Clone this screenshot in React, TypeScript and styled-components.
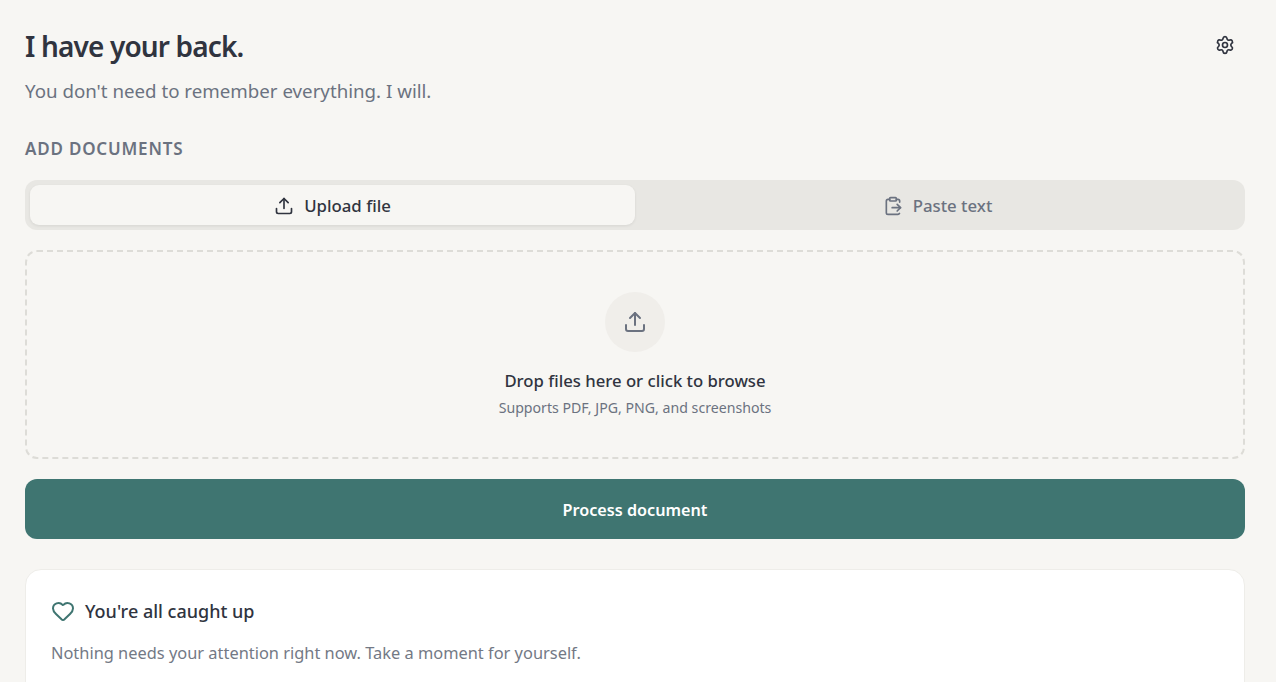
import React from "react";
import styled, { createGlobalStyle } from "styled-components";
import { ClipboardPaste, Heart, Settings, Upload } from "lucide-react";

const GlobalStyle = createGlobalStyle`
  html, body {
    margin: 0;
    height: 100%;
    overflow: hidden;
    background: #f7f6f3;
  }
  * {
    box-sizing: border-box;
  }
  body {
    font-family: "Noto Sans", "Open Sans", sans-serif;
    color: #30343f;
  }
`;

const Page = styled.main`
  padding: 25px 31px 0 25px;
  display: flex;
  flex-direction: column;
`;

const Header = styled.header`
  display: flex;
  justify-content: space-between;
  align-items: flex-start;
  margin-bottom: 31px;
`;

const Title = styled.h1`
  margin: 0 0 9px;
  font-size: 28px;
  line-height: 42px;
  font-weight: 600;
  letter-spacing: -0.85px;
`;

const Subtitle = styled.p`
  margin: 0;
  font-size: 18.72px;
  line-height: 30px;
  color: #6b7280;
`;

const IconButton = styled.button`
  width: 40px;
  height: 40px;
  border: 0;
  padding: 0;
  background: transparent;
  color: #30343f;
  display: flex;
  align-items: center;
  justify-content: center;
`;

const SectionLabel = styled.h2`
  margin: 0 0 19px;
  font-size: 17px;
  line-height: 24px;
  font-weight: 600;
  letter-spacing: 0.8px;
  text-transform: uppercase;
  color: #6b7280;
`;

const Tabs = styled.div`
  height: 50px;
  padding: 5px;
  border-radius: 12px;
  background: #e8e7e3;
  display: grid;
  grid-template-columns: 1fr 1fr;
  margin-bottom: 20px;
`;

const Tab = styled.button<{ $active?: boolean }>`
  border: 0;
  border-radius: 9px;
  padding: 1px 0 0;
  font: inherit;
  font-size: 16.8px;
  font-weight: 500;
  display: flex;
  align-items: center;
  justify-content: center;
  gap: 10px;
  color: ${(props) => (props.$active ? "#30343f" : "#6b7280")};
  background: ${(props) => (props.$active ? "#f7f6f3" : "transparent")};
  box-shadow: ${(props) => (props.$active ? "0 1px 3px rgba(0, 0, 0, 0.08)" : "none")};
`;

const DropZone = styled.div`
  height: 209px;
  border: 2px dashed #dddcd7;
  border-radius: 12px;
  display: flex;
  flex-direction: column;
  align-items: center;
  padding-top: 40px;
  margin-bottom: 20px;
`;

const DropIcon = styled.div`
  width: 60px;
  height: 60px;
  border-radius: 50%;
  background: #f0eeea;
  color: #6b7280;
  display: flex;
  align-items: center;
  justify-content: center;
  margin-bottom: 16px;
`;

const DropTitle = styled.div`
  font-size: 16.7px;
  line-height: 26px;
  font-weight: 500;
  margin-bottom: 3px;
`;

const DropHint = styled.div`
  font-size: 14.15px;
  line-height: 21px;
  color: #6b7280;
`;

const PrimaryButton = styled.button`
  height: 60px;
  border: 0;
  border-radius: 12px;
  padding: 2px 0 0;
  background: #3f7571;
  color: #fff;
  font: inherit;
  font-size: 16.2px;
  font-weight: 600;
  margin-bottom: 30px;
`;

const Card = styled.section`
  background: #fff;
  border: 1px solid #eeede9;
  border-radius: 16px;
  padding: 25px;
  height: 200px;
`;

const CardHead = styled.div`
  display: flex;
  align-items: center;
  gap: 10px;
  margin-bottom: 14px;
  color: #3f7571;
`;

const CardTitle = styled.h3`
  margin: 0;
  padding-top: 1px;
  font-size: 18px;
  line-height: 30px;
  font-weight: 500;
  color: #30343f;
`;

const CardText = styled.p`
  margin: 0;
  font-size: 16.4px;
  line-height: 26px;
  color: #737985;
`;

export default function App() {
  return (
    <>
      <GlobalStyle />
      <Page>
        <Header>
          <div>
            <Title>I have your back.</Title>
            <Subtitle>You don't need to remember everything. I will.</Subtitle>
          </div>
          <IconButton aria-label="Settings">
            <Settings size={20} />
          </IconButton>
        </Header>
        <SectionLabel>Add documents</SectionLabel>
        <Tabs>
          <Tab $active>
            <Upload size={20} />
            Upload file
          </Tab>
          <Tab>
            <ClipboardPaste size={20} />
            Paste text
          </Tab>
        </Tabs>
        <DropZone>
          <DropIcon>
            <Upload size={24} />
          </DropIcon>
          <DropTitle>Drop files here or click to browse</DropTitle>
          <DropHint>Supports PDF, JPG, PNG, and screenshots</DropHint>
        </DropZone>
        <PrimaryButton>Process document</PrimaryButton>
        <Card>
          <CardHead>
            <Heart size={24} />
            <CardTitle>You're all caught up</CardTitle>
          </CardHead>
          <CardText>Nothing needs your attention right now. Take a moment for yourself.</CardText>
        </Card>
      </Page>
    </>
  );
}
